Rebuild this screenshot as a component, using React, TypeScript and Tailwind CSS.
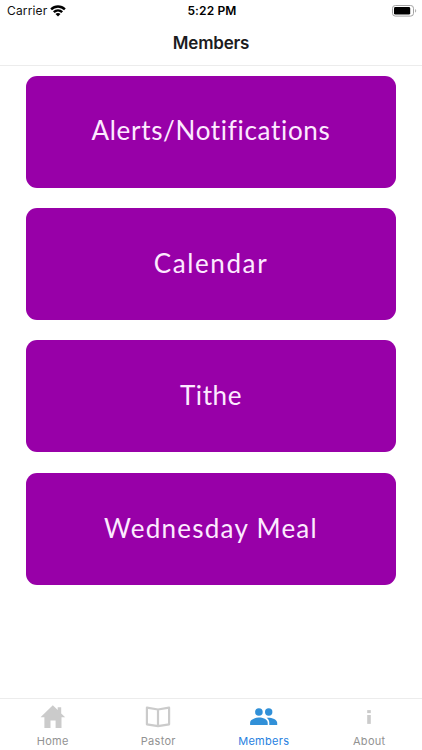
import type { ReactNode } from "react";

const cards = [
  { label: "Alerts/Notifications", text: "tracking-[0.68px]" },
  { label: "Calendar", text: "tracking-[1.6px]" },
  { label: "Tithe", text: "tracking-[0.6px]" },
  { label: "Wednesday Meal", text: "tracking-[1.25px]" },
];

function WifiIcon() {
  return (
    <svg width="16" height="12" viewBox="0 0 16 12" fill="none" stroke="#000" strokeWidth="2.4">
      <path d="M1.1 4.4C5 .6 11 .6 14.9 4.4" />
      <path d="M3.8 7.2c2.4-2.3 6-2.3 8.4 0" />
      <path d="M8 11.5 5.5 9c1.4-1.2 3.6-1.2 5 0Z" fill="#000" stroke="none" />
    </svg>
  );
}

function BatteryIcon() {
  return (
    <svg width="25" height="12" viewBox="0 0 25 12" fill="none">
      <rect x=".5" y=".5" width="21" height="10.6" rx="2.8" stroke="#a3a3a3" />
      <rect x="2" y="2" width="16.2" height="7.6" rx="1.4" fill="#000" />
      <path d="M23.2 4v3.6c1.3-.5 1.3-3.1 0-3.6Z" fill="#a3a3a3" />
    </svg>
  );
}

function HomeIcon() {
  return (
    <svg width="26" height="26" viewBox="0 0 26 26" fill="#cbcbcb">
      <path d="M12.8 2.300 17.700 7V4.300h3.500v6.200l4 3.700h-3.700v10.800h-5.900v-7.400h-5.100v7.400H4.400V14.200H.5Z" />
    </svg>
  );
}

function BookIcon() {
  return (
    <svg width="26" height="26" viewBox="0 0 26 26" fill="none" stroke="#cbcbcb" strokeWidth="2.2" strokeLinejoin="round">
      <path d="M1.9 4.7 13 6.5 24.1 4.700V21.300L13 23.100 1.900 21.300ZM13 6.500v16.600" />
    </svg>
  );
}

function PeopleIcon() {
  return (
    <svg width="28" height="26" viewBox="0 0 28 26" fill="#3190d8">
      <circle cx="8.9" cy="9" r="3.8" />
      <circle cx="18.7" cy="9" r="3.7" />
      <path d="M.1 22.100v-2.400c0-3.300 4.900-5.100 8.800-5.100s8.800 1.800 8.800 5.100v2.400Z" />
      <path d="M16.600 14.700c4.700-.4 10.600 1.500 10.600 5v2.400h-7.900v-2.400c0-2.200-.9-3.800-2.700-5Z" />
    </svg>
  );
}

function InfoIcon() {
  return (
    <svg width="26" height="26" viewBox="0 0 26 26" fill="#cbcbcb">
      <rect x="11.2" y="7.1" width="3.6" height="3" />
      <path d="M11.200 12h3.600v8.900h-3.600Z" />
    </svg>
  );
}

function Tab({ icon, label, active }: { icon: ReactNode; label: string; active?: boolean }) {
  return (
    <a className={`flex flex-1 flex-col items-center pt-1 ${active ? "text-[#2781df]" : "text-[#929292]"}`}>
      {icon}
      <span className="mt-1 text-[11px] leading-4 tracking-[0.3px]">{label}</span>
    </a>
  );
}

export default function App() {
  return (
    <div className="flex h-[750px] w-[422px] flex-col overflow-hidden bg-white font-['Inter',sans-serif]">
      <header className="h-[66px] shrink-0 border-b border-[#ececec]">
        <div className="grid h-[22px] grid-cols-3 items-center px-[7px] pr-[5px]">
          <div className="flex items-center gap-[3px]">
            <span className="text-[12px] tracking-[0.15px] text-[#111]">Carrier</span>
            <WifiIcon />
          </div>
          <span className="text-center text-[12px] font-semibold tracking-[0.15px]">5:22 PM</span>
          <div className="flex justify-end">
            <BatteryIcon />
          </div>
        </div>
        <h1 className="mt-[9px] text-center text-[17px] font-semibold leading-6 tracking-[-0.2px] text-[#1c1c1e]">
          Members
        </h1>
      </header>

      <main className="flex flex-1 flex-col gap-[20.4px] px-[26px] pt-[9.7px]">
        {cards.map((card) => (
          <button
            key={card.label}
            className="flex h-[112px] shrink-0 items-center justify-center rounded-[11px] bg-[#9800a8] pb-[2.5px]"
          >
            <span className={`font-['Lato',sans-serif] text-[26px] leading-8 text-[#fdeaff] [font-variant-ligatures:none] ${card.text}`}>
              {card.label}
            </span>
          </button>
        ))}
      </main>

      <nav className="flex h-[52px] shrink-0 border-t border-[#ececec]">
        <Tab icon={<HomeIcon />} label="Home" />
        <Tab icon={<BookIcon />} label="Pastor" />
        <Tab icon={<PeopleIcon />} label="Members" active />
        <Tab icon={<InfoIcon />} label="About" />
      </nav>
    </div>
  );
}
